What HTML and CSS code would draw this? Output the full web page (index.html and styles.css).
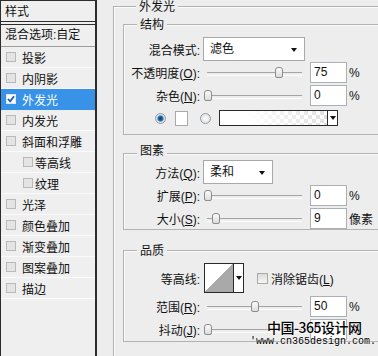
FILE: index.html
```html
<!DOCTYPE html>
<html lang="zh-CN">

<head>
    <meta charset="UTF-8">
    <meta name="viewport" content="width=device-width, initial-scale=1.0">
    <title>图层样式 - 外发光</title>
    <link rel="stylesheet" href="styles.css">
</head>

<body>
    <div id="style-list">
        <div class="list-title">样式</div>
        <div class="list-box">
            <div class="list-blend">混合选项:自定</div>
            <div class="list-item"><span class="check"></span>投影</div>
            <div class="list-item"><span class="check"></span>内阴影</div>
            <div class="list-item selected">
                <span class="check on">
                    <svg width="8" height="8" viewBox="0 0 8 8"><path d="M1 4 L3.2 6.3 L7 1.3" fill="none" stroke="#1d5db5" stroke-width="1.8"/></svg>
                </span>外发光
            </div>
            <div class="list-item"><span class="check"></span>内发光</div>
            <div class="list-item"><span class="check"></span>斜面和浮雕</div>
            <div class="list-item sub"><span class="check"></span>等高线</div>
            <div class="list-item sub"><span class="check"></span>纹理</div>
            <div class="list-item"><span class="check"></span>光泽</div>
            <div class="list-item"><span class="check"></span>颜色叠加</div>
            <div class="list-item"><span class="check"></span>渐变叠加</div>
            <div class="list-item"><span class="check"></span>图案叠加</div>
            <div class="list-item"><span class="check"></span>描边</div>
        </div>
    </div>

    <div id="settings">
        <div class="group outer">
            <div class="group-title">外发光</div>

            <!-- 结构 -->
            <div class="group inner" id="structure">
                <div class="group-title">结构</div>
                <div class="row row-select">
                    <span class="lbl">混合模式:</span>
                    <div class="select wide">滤色<span class="arrow"></span></div>
                </div>
                <div class="row">
                    <span class="lbl">不透明度(<u>O</u>):</span>
                    <div class="slider"><span class="thumb" style="left: 68px"></span></div>
                    <div class="field">75</div>
                    <span class="unit">%</span>
                </div>
                <div class="row">
                    <span class="lbl">杂色(<u>N</u>):</span>
                    <div class="slider"><span class="thumb" style="left: -3px"></span></div>
                    <div class="field">0</div>
                    <span class="unit">%</span>
                </div>
                <div class="row row-color">
                    <span class="radio on"></span>
                    <span class="swatch"></span>
                    <span class="radio"></span>
                    <div class="gradient"><span class="grad-fill"></span><span class="grad-btn"><span class="arrow"></span></span></div>
                </div>
            </div>

            <!-- 图素 -->
            <div class="group inner" id="elements">
                <div class="group-title">图素</div>
                <div class="row row-select">
                    <span class="lbl">方法(<u>Q</u>):</span>
                    <div class="select narrow">柔和<span class="arrow"></span></div>
                </div>
                <div class="row">
                    <span class="lbl">扩展(<u>P</u>):</span>
                    <div class="slider"><span class="thumb" style="left: -3px"></span></div>
                    <div class="field">0</div>
                    <span class="unit">%</span>
                </div>
                <div class="row row-short">
                    <span class="lbl">大小(<u>S</u>):</span>
                    <div class="slider"><span class="thumb" style="left: 5px"></span></div>
                    <div class="field">9</div>
                    <span class="unit">像素</span>
                </div>
            </div>

            <!-- 品质 -->
            <div class="group inner" id="quality">
                <div class="group-title">品质</div>
                <div class="row row-contour">
                    <span class="lbl">等高线:</span>
                    <div class="contour"><span class="contour-pic"></span><span class="contour-btn"><span class="arrow"></span></span></div>
                    <span class="box"></span>
                    <span class="box-label">消除锯齿(<u>L</u>)</span>
                </div>
                <div class="row row-range">
                    <span class="lbl">范围(<u>R</u>):</span>
                    <div class="slider"><span class="thumb" style="left: 44px"></span></div>
                    <div class="field">50</div>
                    <span class="unit">%</span>
                </div>
                <div class="row">
                    <span class="lbl">抖动(<u>J</u>):</span>
                    <div class="slider"><span class="thumb" style="left: -3px"></span></div>
                    <div class="field">0</div>
                    <span class="unit">%</span>
                </div>
            </div>
        </div>
    </div>

    <div id="watermark">
        <div class="wm-name">中国-365设计网</div>
        <div class="wm-url">'www.cn365design.com.</div>
    </div>
</body>

</html>
```

FILE: styles.css
```css
* {
    box-sizing: border-box;
}

body {
    margin: 0;
    width: 378px;
    height: 356px;
    overflow: hidden;
    position: relative;
    display: flex;
    background: #ededed;
    font-family: "Liberation Sans", "Noto Sans CJK SC", sans-serif;
    font-size: 12px;
    color: #111;
}

u {
    text-decoration: underline;
    text-underline-offset: 1px;
}

/* left list of styles */

#style-list {
    flex: none;
    width: 97px;
    height: 356px;
    border-left: 1px solid #2d2d2d;
    border-right: 2px solid #2d2d2d;
    background: #efefef;
}

.list-title {
    height: 22px;
    border-top: 1px solid #2d2d2d;
    border-bottom: 1px solid #2d2d2d;
    padding: 3px 0 0 4px;
    line-height: 16px;
}

.list-box {
    margin-top: 2px;
    border-top: 1px solid #2d2d2d;
}

.list-blend {
    height: 22px;
    padding-left: 4px;
    line-height: 21px;
    border-bottom: 1px solid #9c9c9c;
}

.list-item {
    display: flex;
    align-items: center;
    height: 21px;
    padding-left: 5px;
    border-bottom: 1px solid #fafafa;
}

.list-item.sub {
    padding-left: 22px;
}

.list-item.selected {
    background: #3792e8;
    color: #fff;
    border-bottom-color: #3792e8;
}

.check {
    flex: none;
    display: flex;
    align-items: center;
    justify-content: center;
    width: 10px;
    height: 10px;
    margin-right: 6px;
    border: 1px solid #b9b9b9;
    background: #e4e4e4;
}

.list-item.sub .check {
    margin-right: 2px;
}

.check.on {
    background: #fff;
    border-color: #d8e6f5;
}

/* right settings */

#settings {
    flex: none;
    width: 281px;
    height: 356px;
    padding-left: 16px;
    overflow: hidden;
}

.group {
    border-top: 1px solid #b2b2b2;
    border-left: 1px solid #b2b2b2;
    box-shadow: inset 1px 1px 0 #fbfbfb;
}

.group-title {
    display: table;
    margin: -7px 0 0 13px;
    padding: 0 3px;
    line-height: 14px;
    background: #ededed;
}

.outer {
    width: 265px;
    height: 350px;
    margin-top: 6px;
    padding-left: 9px;
}

.inner {
    border-bottom: 1px solid #b2b2b2;
}

#structure {
    margin-top: 10px;
    padding: 5px 0 5px;
}

#structure .group-title,
#elements .group-title,
#quality .group-title {
    margin-top: -12px;
    margin-bottom: 5px;
}

#elements {
    margin-top: 18px;
    padding: 2px 0 0;
}

#elements .group-title {
    margin-bottom: 2px;
}

#quality {
    margin-top: 20px;
    padding: 5px 0 0;
}

.row {
    display: flex;
    align-items: center;
    height: 23px;
}

.row-select {
    height: 24px;
}

.row-short {
    height: 22px;
}

.row-contour {
    height: 30px;
}

.row-range {
    margin-top: 2px;
}

.lbl {
    flex: none;
    width: 76px;
    text-align: right;
    white-space: nowrap;
}

.select {
    position: relative;
    height: 24px;
    margin-left: 3px;
    padding-left: 6px;
    line-height: 22px;
    background: #fff;
    border: 1px solid #a9a9a9;
}

.select.wide {
    width: 102px;
}

.select.narrow {
    width: 70px;
}

.arrow {
    display: block;
    width: 0;
    height: 0;
    border-left: 3.5px solid transparent;
    border-right: 3.5px solid transparent;
    border-top: 4px solid #111;
}

.select .arrow {
    position: absolute;
    right: 7px;
    top: 10px;
}

.slider {
    position: relative;
    flex: none;
    width: 95px;
    height: 100%;
    margin-left: 7px;
}

.slider::before {
    content: "";
    position: absolute;
    left: 0;
    right: 0;
    top: 11px;
    height: 2px;
    border-top: 1px solid #a4a4a4;
    border-bottom: 1px solid #fdfdfd;
}

.thumb {
    position: absolute;
    top: 6px;
    width: 8px;
    height: 11px;
    border: 1px solid #8c8c8c;
    border-radius: 3px 3px 2px 2px;
    background: linear-gradient(#fbfbfb, #dcdcdc);
}

.field {
    flex: none;
    width: 37px;
    height: 21px;
    margin-left: 8px;
    padding-left: 3px;
    line-height: 19px;
    background: #fff;
    border: 1px solid #abb0b6;
}

.unit {
    margin-left: 2px;
}

/* colour row */

.row-color {
    height: 22px;
}

.radio {
    flex: none;
    width: 11px;
    height: 11px;
    border-radius: 50%;
    border: 1px solid #8f9aa4;
    background: radial-gradient(circle, #fff 0, #d8d8d8 100%);
}

.radio.on {
    margin-left: 31px;
    background: radial-gradient(circle, #143d6c 0, #2d6aa8 2.5px, #cfe0ef 3.5px, #f3f3f3 100%);
}

.swatch {
    flex: none;
    width: 13px;
    height: 15px;
    margin: 0 12px 0 9px;
    background: #fff;
    border: 1px solid #a9a9a9;
}

.gradient {
    flex: none;
    display: flex;
    width: 119px;
    height: 16px;
    margin-left: 8px;
    border: 1px solid #2a2a2a;
}

.grad-fill {
    flex: 1;
    background:
        linear-gradient(to right, #fff 25%, rgba(255, 255, 255, 0.35)),
        repeating-conic-gradient(#cfcfcf 0 25%, #fff 0 50%) 0 0 / 8px 8px;
}

.grad-btn {
    flex: none;
    display: flex;
    align-items: center;
    justify-content: center;
    width: 10px;
    background: #fff;
    border-left: 1px solid #2a2a2a;
}

/* contour row */

.contour {
    flex: none;
    display: flex;
    width: 40px;
    height: 30px;
    margin-left: 4px;
    border: 1px solid #2a2a2a;
}

.contour-pic {
    flex: 1;
    background: linear-gradient(to top left, #a9a9a9 50%, #fff 50%);
}

.contour-btn {
    flex: none;
    display: flex;
    align-items: center;
    justify-content: center;
    width: 10px;
    background: #fff;
    border-left: 1px solid #2a2a2a;
}

.box {
    flex: none;
    width: 11px;
    height: 11px;
    margin-left: 13px;
    border: 1px solid #a9a9a9;
    background: linear-gradient(#dcdcdc, #f5f5f5);
}

.box-label {
    margin-left: 3px;
}

/* site mark stamped over the picture */

#watermark {
    position: absolute;
    left: 250px;
    top: 318px;
    color: #000;
    text-shadow: 0 0 2px #fff, 0 0 2px #fff;
}

.wm-name {
    margin-left: 17px;
    font-family: "Noto Sans CJK SC", sans-serif;
    font-size: 14px;
    font-weight: 500;
    line-height: 18px;
    letter-spacing: -0.5px;
}

.wm-url {
    font-family: "Liberation Mono", monospace;
    font-size: 10px;
    line-height: 11px;
}
```
